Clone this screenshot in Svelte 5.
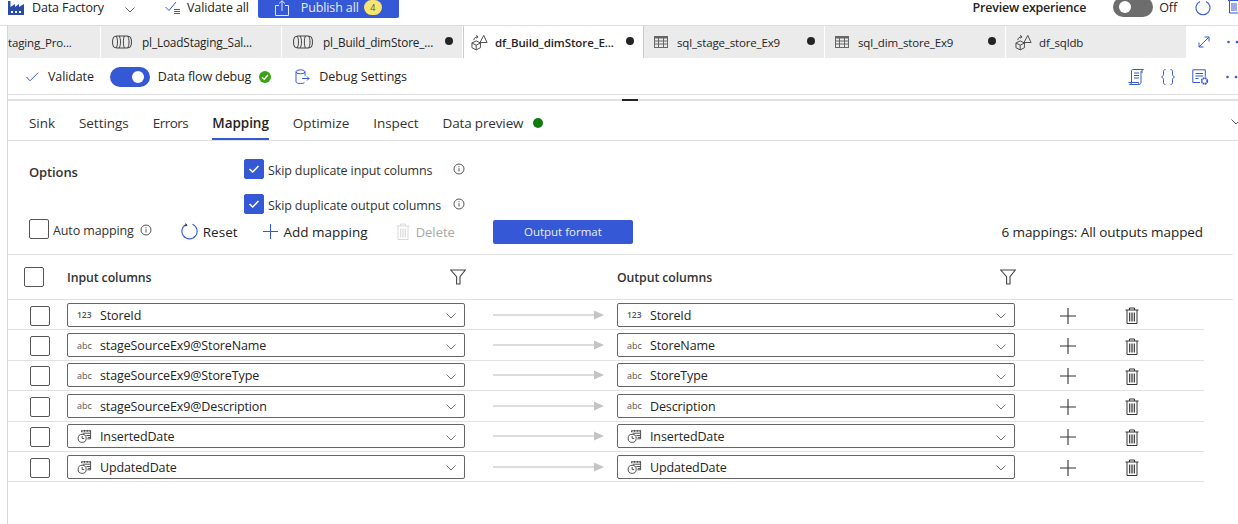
<script>
  const tabs = [
    { label: 'taging_Pro...', icon: '', w: 93, dot: false, first: true },
    { label: 'pl_LoadStaging_Sal...', icon: 'pipe', w: 181, dot: false },
    { label: 'pl_Build_dimStore_...', icon: 'pipe', w: 181, dot: true },
    { label: 'df_Build_dimStore_E...', icon: 'flow', w: 181, dot: true, active: true },
    { label: 'sql_stage_store_Ex9', icon: 'table', w: 181, dot: true },
    { label: 'sql_dim_store_Ex9', icon: 'table', w: 181, dot: true },
    { label: 'df_sqldb', icon: 'flow', w: 181, dot: false }
  ];
  const panelTabs = ['Sink', 'Settings', 'Errors', 'Mapping', 'Optimize', 'Inspect', 'Data preview'];
  const rows = [
    { type: '123', input: 'StoreId', output: 'StoreId' },
    { type: 'abc', input: 'stageSourceEx9@StoreName', output: 'StoreName' },
    { type: 'abc', input: 'stageSourceEx9@StoreType', output: 'StoreType' },
    { type: 'abc', input: 'stageSourceEx9@Description', output: 'Description' },
    { type: 'date', input: 'InsertedDate', output: 'InsertedDate' },
    { type: 'date', input: 'UpdatedDate', output: 'UpdatedDate' }
  ];
</script>

{#snippet info()}
  <svg class="info" width="12" height="12" viewBox="0 0 12 12"><circle cx="6" cy="6" r="5" fill="none" stroke="#555"/><path d="M6 5.200v3.300M6 3.200v1" stroke="#555" fill="none"/></svg>
{/snippet}

{#snippet chevron(color)}
  <svg class="chev" width="10" height="6" viewBox="0 0 10 6"><path d="M.5.500 5 5l4.500-4.500" fill="none" stroke={color}/></svg>
{/snippet}

{#snippet funnel()}
  <svg width="16" height="16" viewBox="0 0 16 16"><path d="M.7 1h14.600L10 7.600V15H6.600V7.600z" fill="none" stroke="#444" stroke-width="1.100"/></svg>
{/snippet}

{#snippet check()}
  <span class="box on"><svg width="12" height="10" viewBox="0 0 12 10"><path d="M1.500 5 4.700 8 10.500 2" fill="none" stroke="#fff" stroke-width="1.600"/></svg></span>
{/snippet}

{#snippet moreDots()}
  <svg class="more" width="12" height="4" viewBox="0 0 12 4"><circle cx="1.500" cy="2" r="1.300" fill="#3558d6"/><circle cx="10" cy="2" r="1.300" fill="#3558d6"/></svg>
{/snippet}

{#snippet typeIcon(t)}
  {#if t === 'date'}
    <svg class="ty" width="16" height="16" viewBox="0 0 16 16" fill="none" stroke="#444"><path d="M5 4V2.500h9.500V11H11M5 2v1.500M8 1.500v2M11 1.500v2M14 1.500v2M6 5h8M10 7.500h4.500M11.500 9.500h3"/><circle cx="5.500" cy="10.500" r="4.300"/><path d="M5.500 8v2.700h2.200"/></svg>
  {:else}
    <span class="ty" class:num={t === '123'}>{t}</span>
  {/if}
{/snippet}

{#snippet select(t, text, cls)}
  <div class="select {cls}">
    {@render typeIcon(t)}
    <span class="val">{text}</span>
    <span class="selchev">{@render chevron('#777')}</span>
  </div>
{/snippet}

{#snippet trash(color)}
  <svg width="14" height="17" viewBox="0 0 14 17" fill="none" stroke={color}><path d="M.5 3h13M4.500 3V1h5v2M2 3v13.500h10V3"/><path d="M4.500 5.500v9M6.200 5.500v9M7.800 5.500v9M9.500 5.500v9" stroke-width=".9"/></svg>
{/snippet}

{#snippet plus(color, size)}
  <svg width={size} height={size} viewBox="0 0 16 16"><path d="M8 0v16M0 8h16" fill="none" stroke={color} stroke-width="1.100"/></svg>
{/snippet}

<div class="page">
  <header class="topbar">
    <svg class="factory" width="16" height="15" viewBox="0 0 16 15"><path d="M0 15V1h2.500v6L7 4v3l4-3v3l5-3v11z" fill="#2c4aa8"/><path d="M3 11h2v2H3zM7 11h2v2H7zM11 11h2v2h-2z" fill="#fff"/></svg>
    <span class="brand">Data Factory</span>
    <span class="brandchev">{@render chevron('#666')}</span>
    <svg class="valall" width="16" height="14" viewBox="0 0 16 14" fill="none" stroke="#3558d6"><path d="M.5 6 4 9.500 11 1"/><path d="M9 8.500h6M9 10.500h6M9 12.500h6"/></svg>
    <span class="validate-all">Validate all</span>
    <button class="publish">
      <svg width="14" height="16" viewBox="0 0 14 16" fill="none" stroke="#dfe5fa"><path d="M4 5.500H.5v10h13v-10H10M7 11V.8M4 3.500 7 .8l3 2.700"/></svg>
      <span class="pubtext">Publish all</span>
      <span class="badge">4</span>
    </button>
    <span class="spacer"></span>
    <span class="preview">Preview experience</span>
    <span class="toggle off"><i></i></span>
    <span class="off-text">Off</span>
    <svg class="refresh" width="16" height="16" viewBox="0 0 16 16"><path d="M5 1.500a7 7 0 1 0 6 0" fill="none" stroke="#3558d6" stroke-width="1.100"/></svg>
    <svg class="toptrash" width="12" height="16" viewBox="0 0 12 16" fill="none" stroke="#3558d6"><path d="M0 2.500h12M1.500 2.500V15h9.500V2.500M4 5v8M6 5v8M8 5v8"/></svg>
  </header>

  <div class="frame">
    <nav class="tabs">
      {#each tabs as tab}
        <div class="tab" class:active={tab.active} class:first={tab.first} style="width:{tab.w}px">
          {#if tab.icon === 'pipe'}
            <svg class="tabicon pipe" width="20" height="14" viewBox="0 0 20 14" fill="none" stroke="#444"><rect x=".6" y="1" width="18.800" height="12" rx="4"/><path d="M4 1c2 2 2 10 0 12M7 1c2 2 2 10 0 12M12.500 1c-1.500 2-1.500 10 0 12M15.500 1c2 2 2 10 0 12"/></svg>
          {:else if tab.icon === 'flow'}
            <svg class="tabicon" width="17" height="17" viewBox="0 0 18 17" fill="none" stroke="#444"><path d="m1 9 4.500-2.200L10 9v5l-4.500 2.300L1 14zM1 9l4.500 2.300L10 9M5.500 11.300v5"/><path d="m13.500 1-4 7.500H17zM3 6c0-2 1.500-3.500 4-3.500M5.500.8 7.500 2.500 5.500 4"/></svg>
          {:else if tab.icon === 'table'}
            <svg class="tabicon tbl" width="14" height="12" viewBox="0 0 14 12" fill="none" stroke="#666"><rect x=".5" y=".5" width="13" height="11"/><path d="M0 1.500h14" stroke-width="2"/><path d="M0 5h14M0 8h14M4.500 0v12M9.500 0v12"/></svg>
          {/if}
          <span class="tablabel">{tab.label}</span>
          {#if tab.dot}<span class="dot"></span>{/if}
        </div>
      {/each}
      <div class="tabactions">
        <svg width="12" height="12" viewBox="0 0 12 12" fill="none" stroke="#3558d6"><path d="M1 11 11 1M6.500 1H11v4.500M1 6.500V11h4.500"/></svg>
        {@render moreDots()}
      </div>
    </nav>

    <div class="toolbar">
      <svg class="tcheck" width="13" height="10" viewBox="0 0 13 10"><path d="M.5 5 4 8.800 12 .8" fill="none" stroke="#3558d6"/></svg>
      <span class="tvalidate">Validate</span>
      <span class="toggle on"><i></i></span>
      <span class="tdebug">Data flow debug</span>
      <svg class="okay" width="12" height="12" viewBox="0 0 12 12"><circle cx="6" cy="6" r="6" fill="#3aa313"/><path d="M3 6.200 5.200 8.300 9 4" fill="none" stroke="#fff" stroke-width="1.400"/></svg>
      <svg class="dbset" width="15" height="15" viewBox="0 0 15 15" fill="none" stroke="#3558d6"><ellipse cx="5.500" cy="2.800" rx="4.500" ry="2"/><path d="M1 2.800v10c0 1 2 1.800 4.500 1.800s3.500-.6 4-1.200M10 2.800v4M7 9.500h7M12 7.500l2 2-2 2"/></svg>
      <span class="tsettings">Debug Settings</span>
      <span class="spacer"></span>
      <svg width="16" height="16" viewBox="0 0 16 16" fill="none" stroke="#3558d6"><path d="M3.500 13.500V2c0-1 .6-1.500 1.500-1.500h10.500c-.8 0-1.500.7-1.500 1.500v2M3.500 13.500c0 1.200-.8 2-2 2h9.500c1.200 0 2-.8 2-2V2M.5 13.500h10c0 1 .2 1.500.5 2M6 4h5M6 6.500h5M6 9h5"/></svg>
      <svg class="braces" width="14" height="16" viewBox="0 0 14 16" fill="none" stroke="#3558d6"><path d="M4.500.5C2.500.5 2.500 2 2.500 4S2.500 7 .5 8c2 1 2 2 2 4s0 3.500 2 3.500M9.500.5c2 0 2 1.500 2 3.500s0 3 2 4c-2 1-2 2-2 4s0 3.500-2 3.500"/></svg>
      <svg width="17" height="16" viewBox="0 0 17 16" fill="none" stroke="#3558d6"><path d="M8 13.500H.8V.8h12.500v7M3.500 4.500h7.500M3.500 7h7.500M3.500 9.500h3"/><circle cx="12.500" cy="12" r="2.800" stroke-width="1.800" stroke-dasharray="1.700 .5"/></svg>
      <span class="tdots">{@render moreDots()}</span>
    </div>

    <div class="splitter"><span></span></div>

    <nav class="ptabs">
      {#each panelTabs as p}
        <span class="ptab" class:sel={p === 'Mapping'}>{p}</span>
      {/each}
      <span class="gdot"></span>
      <span class="spacer"></span>
      <span class="pchev">{@render chevron('#555')}</span>
    </nav>

    <section class="options">
      <strong class="optlabel">Options</strong>
      <div class="optchecks">
        <label class="optitem">{@render check()}<span class="cklabel">Skip duplicate input columns</span>{@render info()}</label>
        <label class="optitem">{@render check()}<span class="cklabel">Skip duplicate output columns</span>{@render info()}</label>
      </div>
    </section>

    <div class="actions">
      <span class="box"></span>
      <span class="auto">Auto mapping</span>
      {@render info()}
      <svg class="areset" width="17" height="17" viewBox="0 0 17 17"><path d="M5.500 1.300A7.600 7.600 0 1 0 11.500 1.300" fill="none" stroke="#3558d6" stroke-width="1.100"/><path d="M4.500 .5 6 2.500 3.500 3" fill="none" stroke="#333"/></svg>
      <span class="atext">Reset</span>
      <span class="aplus">{@render plus('#3558d6', 15)}</span>
      <span class="atext add">Add mapping</span>
      <span class="adel">{@render trash('#d9d9d9')}</span>
      <span class="atext disabled">Delete</span>
      <button class="fmt">Output format</button>
      <span class="spacer"></span>
      <span class="summary">6 mappings: All outputs mapped</span>
    </div>

    <div class="mapheader">
      <span class="box"></span>
      <strong class="h-in">Input columns</strong>
      <span class="f1">{@render funnel()}</span>
      <strong class="h-out">Output columns</strong>
      <span class="f2">{@render funnel()}</span>
    </div>

    <div class="maprows">
      {#each rows as r}
        <div class="maprow">
          <span class="box"></span>
          {@render select(r.type, r.input, 'in')}
          <svg class="arrow" width="111" height="10" viewBox="0 0 111 10"><path d="M0 5h101" stroke="#bbb"/><path d="M101 .5 111 5l-10 4.500z" fill="#c4c4c4"/></svg>
          {@render select(r.type, r.output, 'out')}
          <span class="rplus">{@render plus('#333', 16)}</span>
          <span class="rtrash">{@render trash('#333')}</span>
        </div>
      {/each}
    </div>
  </div>
</div>

<style>
  :global(body) {
    margin: 0;
    background: #fff;
  }
  .page {
    width: 1238px;
    height: 524px;
    overflow: hidden;
    font-family: "Open Sans", "Noto Sans", sans-serif;
    font-size: 12.500px;
    color: #242424;
    letter-spacing: -0.120px;
  }
  .spacer { flex: 1; }
  svg { display: block; flex: none; }
  .topbar {
    height: 26px;
    box-sizing: border-box;
    display: flex;
    align-items: flex-start;
    border-bottom: 1px solid #ddd;
    background: #fff;
    overflow: hidden;
  }
  .topbar > * { flex: none; }
  .topbar .spacer { flex: 1; }
  .factory { margin: 0 0 0 8px; }
  .brand { margin-left: 8px; line-height: 15px; }
  .brandchev { margin: 7px 0 0 21px; }
  .valall { margin: 1px 0 0 30px; }
  .validate-all { margin-left: 6px; line-height: 15px; }
  .publish {
    margin-left: 9px;
    width: 141px;
    height: 18px;
    background: #3558d6;
    color: #fff;
    border: none;
    border-radius: 0 0 2px 2px;
    display: flex;
    align-items: center;
    padding: 0 0 3px 17px;
    font: inherit;
    letter-spacing: inherit;
  }
  .pubtext { margin-left: 12px; color: #e8ecfb; }
  .badge {
    margin-left: 5px;
    width: 18px;
    height: 15px;
    border-radius: 8px;
    background: #f7e56e;
    color: #555;
    font-size: 9px;
    line-height: 15px;
    text-align: center;
  }
  .preview { font-weight: 600; line-height: 15px; letter-spacing: -0.220px; }
  .toggle {
    display: flex;
    align-items: center;
    box-sizing: border-box;
    width: 40px;
    height: 20px;
    border-radius: 10px;
    flex: none;
  }
  .toggle i {
    display: block;
    width: 12px;
    height: 12px;
    border-radius: 50%;
    background: #fff;
  }
  .toggle.off {
    background: #6d6d6d;
    margin: -3px 0 0 27px;
    padding-left: 6px;
  }
  .toggle.on {
    background: #3558d6;
    justify-content: flex-end;
    padding-right: 6px;
  }
  .off-text { margin-left: 6px; line-height: 15px; }
  .refresh { margin: 0 0 0 18px; }
  .toptrash { margin: -2px -2px 0 17px; }

  .frame {
    margin-left: 7px;
    height: 498px;
    box-sizing: border-box;
    border-left: 1px solid #d6d6d6;
  }
  .tabs {
    height: 32px;
    display: flex;
    background: #fff;
  }
  .tab {
    height: 32px;
    box-sizing: border-box;
    display: flex;
    align-items: center;
    padding-left: 9px;
    background: #ebebeb;
    border-right: 1px solid #fff;
    flex: none;
    position: relative;
  }
  .tab.first { padding-left: 0; }
  .tab.active {
    background: #fff;
    border-left: 1px solid #ccc;
    border-right: 1px solid #ccc;
    padding-left: 7px;
    font-weight: 600;
  }
  .tabicon { margin-right: 7px; }
  .tabicon.pipe { margin: 0 10px 0 2px; }
  .tbl { margin-left: 1px; margin-right: 9px; }
  .tablabel { white-space: nowrap; font-size: 11.500px; letter-spacing: -0.150px; }
  .pipe + .tablabel { font-size: 11.800px; }
  .active .tablabel { letter-spacing: -0.100px; }
  .dot {
    position: absolute;
    right: 9px;
    top: 11px;
    width: 8px;
    height: 8px;
    border-radius: 50%;
    background: #242424;
  }
  .tabactions {
    flex: 1;
    display: flex;
    align-items: center;
    padding-left: 11px;
    gap: 17px;
  }
  .toolbar {
    height: 37px;
    box-sizing: border-box;
    display: flex;
    align-items: center;
    padding: 1px 0 0 18px;
    border-bottom: 1px solid #ddd;
    overflow: hidden;
  }
  .tvalidate { margin-left: 9px; }
  .toolbar .toggle { margin-left: 16px; }
  .tdebug { margin-left: 8px; }
  .okay { margin-left: 8px; }
  .dbset { margin-left: 24px; }
  .tsettings { margin-left: 9px; letter-spacing: 0; }
  .braces { margin: 0 17px 0 17px; }
  .tdots { margin: 0 0 0 17px; }
  .splitter {
    margin-top: 4px;
    height: 2px;
    background: #e1e1e1;
    position: relative;
  }
  .splitter span {
    position: absolute;
    left: 614px;
    top: 0;
    width: 16px;
    height: 2px;
    background: #242424;
  }
  .ptabs {
    height: 39px;
    margin-top: 1px;
    box-sizing: border-box;
    display: flex;
    align-items: center;
    padding-left: 21px;
    gap: 24px;
    border-bottom: 1px solid #e1e1e1;
    font-size: 13.500px;
    letter-spacing: -0.050px;
  }
  .ptab {
    height: 38px;
    line-height: 42px;
    box-sizing: border-box;
    color: #333;
  }
  .ptab:nth-child(3) { letter-spacing: -0.500px; }
  .ptab:nth-child(7) { letter-spacing: -0.150px; }
  .ptab.sel {
    font-weight: 600;
    border-bottom: 2px solid #3558d6;
    color: #242424;
  }
  .gdot {
    width: 10px;
    height: 10px;
    border-radius: 50%;
    background: #107c10;
    margin: 4px 0 0 -14px;
  }
  .pchev { margin: 2px -3px 0 0; }
  .options {
    display: flex;
    padding: 18px 0 0 21px;
  }
  .optlabel {
    width: 215px;
    font-weight: 600;
    font-size: 13px;
    line-height: 26px;
    color: #333;
  }
  .optchecks { display: flex; flex-direction: column; gap: 15px; }
  .optitem { display: flex; align-items: center; height: 20px; }
  .cklabel { margin: 2px 0 0 4px; width: 185px; white-space: nowrap; color: #333; }
  .box {
    display: flex;
    align-items: center;
    justify-content: center;
    width: 20px;
    height: 20px;
    box-sizing: border-box;
    border: 1px solid #555;
    border-radius: 2px;
    flex: none;
    background: #fff;
  }
  .box.on { background: #3558d6; border-color: #3558d6; }
  .actions {
    display: flex;
    align-items: center;
    height: 25px;
    margin-top: 5px;
    padding: 0 35px 0 21px;
  }
  .actions > .box { margin-top: -5px; }
  .actions > .info { margin: -3px 0 0 6px; }
  .auto { margin: -3px 0 0 4px; color: #333; }
  .areset { margin-left: 29px; }
  .atext { margin-left: 5px; color: #242424; font-size: 13.500px; letter-spacing: 0; }
  .atext.add { margin-left: 6px; }
  .atext.disabled { margin-left: 6px; color: #a8a8a8; font-size: 13px; }
  .aplus { margin-left: 25px; }
  .adel { margin-left: 28px; }
  .fmt {
    margin-left: 38px;
    width: 140px;
    height: 24px;
    border: none;
    border-radius: 2px;
    background: #3558d6;
    color: #e8ecfb;
    font: inherit;
    font-size: 11.500px;
    letter-spacing: 0;
  }
  .summary { font-size: 13.500px; letter-spacing: -0.080px; }
  .mapheader {
    margin-top: 10px;
    display: flex;
    align-items: center;
    height: 46px;
    box-sizing: border-box;
    border-top: 1px solid #e1e1e1;
    border-bottom: 1px solid #e1e1e1;
    padding-left: 16px;
    margin-right: 5px;
  }
  .mapheader strong { font-weight: 600; color: #333; font-size: 12.300px; letter-spacing: -0.080px; }
  .h-in { margin-left: 23px; width: 383px; }
  .f1 { width: 167px; }
  .h-out { width: 383px; }
  .maprows { margin-right: 34px; }
  .maprow {
    display: flex;
    align-items: center;
    height: 30.400px;
    box-sizing: border-box;
    border-bottom: 1px solid #e1e1e1;
    padding-left: 22px;
  }
  .maprow > .box { margin-top: 2px; }
  .select {
    width: 398px;
    height: 24px;
    box-sizing: border-box;
    border: 1px solid #666;
    border-radius: 2px;
    display: flex;
    align-items: center;
    padding: 0 8px 0 9px;
    flex: none;
  }
  .select.in { margin-left: 17px; }
  .select.out { margin-left: 13px; }
  .selchev { margin-top: 3px; }
  .maprow > .arrow { margin-left: 28px; }
  .ty { width: 15px; flex: none; font-size: 9px; color: #555; letter-spacing: 0; }
  .ty.num { font-weight: 600; font-size: 8.500px; }
  .val { margin: 1px 0 0 8px; flex: 1; white-space: nowrap; font-size: 12.500px; }
  .rplus { margin: 2px 0 0 45px; }
  .rtrash { margin: 2px 0 0 49px; }
</style>
